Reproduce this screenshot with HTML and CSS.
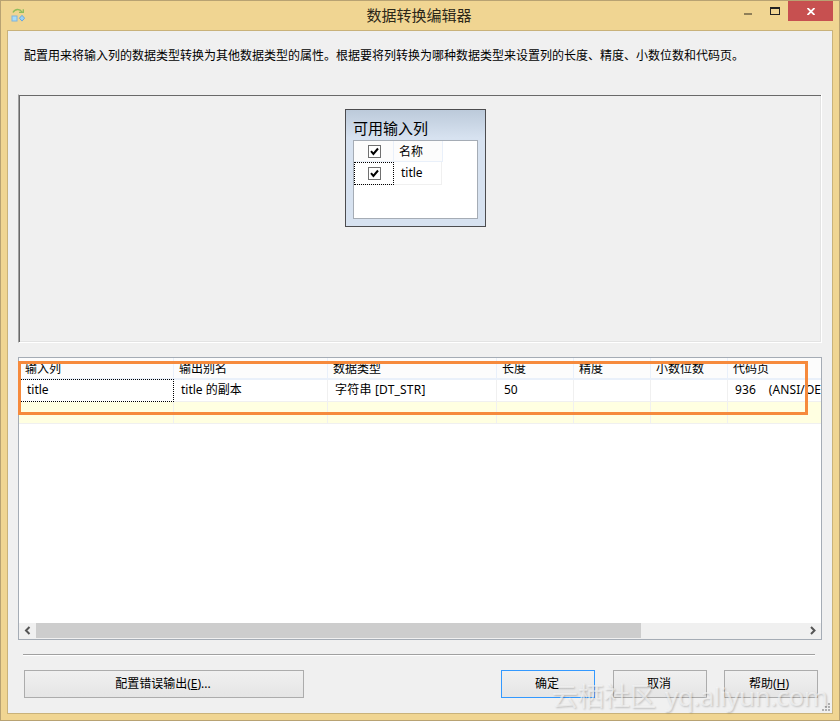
FILE: index.html
```
<!DOCTYPE html>
<html lang="zh-CN">
<head>
    <meta charset="UTF-8">
    <title>数据转换编辑器</title>
    <link rel="stylesheet" href="styles.css">
</head>
<body>
    <div class="window">
        <div class="titlebar">
            <svg class="app-icon" width="14" height="14" viewBox="0 0 14 14">
                <path d="M2 4.5C4 .5 9 .5 11 4" fill="none" stroke="#8fbd5c" stroke-width="1.4"/>
                <path d="M8 4.3h4.3v-3" fill="none" stroke="#8fbd5c" stroke-width="1.3"/>
                <rect x="1" y="8" width="5" height="5" fill="#a9dcf8" stroke="#7fb4dc"/>
                <path d="M11 7.3l2.6 2.9-2.6 2.9-2.6-2.9z" fill="#9bd2f7" stroke="#6aa7dc"/>
            </svg>
            <h1>数据转换编辑器</h1>
            <div class="controls">
                <svg width="54" height="20" viewBox="0 0 54 20" shape-rendering="crispEdges">
                    <rect x="10" y="12" width="8" height="2" fill="#8f7f58"/>
                    <path d="M36 6h10v8H36zM37 8v5h8V8z" fill="#222" fill-rule="evenodd"/>
                </svg>
                <div class="close">
                    <svg width="8" height="7" viewBox="0 0 8 7"><path d="M.5 0l7 7M7.5 0l-7 7" stroke="#fff" stroke-width="1.8"/></svg>
                </div>
            </div>
        </div>

        <div class="client">
            <p class="intro">配置用来将输入列的数据类型转换为其他数据类型的属性。根据要将列转换为哪种数据类型来设置列的长度、精度、小数位数和代码页。</p>

            <div class="canvas">
                <div class="inputs">
                    <h2>可用输入列</h2>
                    <div class="input-list">
                        <div class="input-row head">
                            <span class="check-cell"><svg class="check" width="13" height="13" viewBox="0 0 13 13"><rect x=".5" y=".5" width="12" height="12" fill="#fff" stroke="#707070"/><path d="M3 6.2l2.4 2.7L10 3.5" fill="none" stroke="#000" stroke-width="2"/></svg></span>
                            <span class="name">名称</span>
                        </div>
                        <div class="input-row">
                            <span class="check-cell focus"><svg class="check" width="13" height="13" viewBox="0 0 13 13"><rect x=".5" y=".5" width="12" height="12" fill="#fff" stroke="#707070"/><path d="M3 6.2l2.4 2.7L10 3.5" fill="none" stroke="#000" stroke-width="2"/></svg></span>
                            <span class="name">title</span>
                        </div>
                    </div>
                </div>
            </div>

            <div class="grid-wrap">
                <div class="grid">
                    <div class="row header">
                        <span>输入列</span><span>输出别名</span><span>数据类型</span><span>长度</span><span>精度</span><span>小数位数</span><span>代码页</span>
                    </div>
                    <div class="row">
                        <span class="focus">title</span><span>title 的副本</span><span class="type">字符串 [DT_STR]</span><span>50</span><span></span><span></span><span class="codepage">936 &nbsp;&nbsp;&nbsp;(ANSI/OE</span>
                    </div>
                    <div class="row new">
                        <span></span><span></span><span></span><span></span><span></span><span></span><span></span>
                    </div>
                    <div class="scrollbar">
                        <svg class="arrow" width="17" height="15" viewBox="0 0 17 15"><path d="M10.5 4L7 7.5l3.5 3.5" fill="none" stroke="#555" stroke-width="2"/></svg>
                        <div class="thumb"></div>
                        <svg class="arrow" width="17" height="15" viewBox="0 0 17 15"><path d="M7 4l3.5 3.5L7 11" fill="none" stroke="#555" stroke-width="2"/></svg>
                    </div>
                </div>
                <div class="highlight"></div>
            </div>

            <div class="separator"></div>

            <div class="buttons">
                <button class="wide">配置错误输出(<u>E</u>)...</button>
                <button class="default">确定</button>
                <button>取消</button>
                <button>帮助(<u>H</u>)</button>
            </div>

            <svg class="grip" width="8" height="8" viewBox="0 0 8 8" fill="#b0b0b0" shape-rendering="crispEdges">
                <path d="M6 0h2v2H6zM3 3h2v2H3zM6 3h2v2H6zM0 6h2v2H0zM3 6h2v2H3zM6 6h2v2H6z"/>
            </svg>
            <div class="watermark"><span>云栖社区</span><span class="site">yq.aliyun.com</span></div>
        </div>
    </div>
</body>
</html>
```

FILE: styles.css
```
* {
    box-sizing: border-box;
}

body {
    margin: 0;
    font-family: "Noto Sans", "Noto Sans CJK SC", sans-serif;
    font-size: 12px;
    color: #000;
}

.window {
    width: 840px;
    height: 721px;
    border: 1px solid #b8a272;
    background: #f0d592;
    padding: 0 6px;
    overflow: hidden;
}

.titlebar {
    display: grid;
    grid-template-columns: 98px 1fr 100px;
    height: 29px;
}

.app-icon {
    margin: 7px 0 0 4px;
}

.titlebar h1 {
    margin: 0;
    font-size: 15px;
    font-weight: normal;
    line-height: 28px;
    text-align: center;
    color: #2c2718;
}

.controls {
    display: flex;
    justify-content: flex-end;
}

.close {
    display: flex;
    align-items: center;
    justify-content: center;
    width: 45px;
    height: 20px;
    padding-top: 1px;
    background: #c75050;
}

.client {
    position: relative;
    height: 684px;
    border: 1px solid #c9b27a;
    background: #f0f0f0;
    padding: 0 10px;
}

.intro {
    margin: 0;
    padding: 15px 0 0 6px;
    height: 63px;
    line-height: 20px;
    white-space: nowrap;
}

.canvas {
    width: 804px;
    height: 249px;
    border: 1px solid;
    border-color: #f0f0f0 #fff #fff #a0a0a0;
    box-shadow: inset 1px 1px #696969, inset -1px -1px #e3e3e3;
    padding-top: 14px;
}

.inputs {
    width: 141px;
    height: 118px;
    margin-left: 326px;
    padding: 0 7px;
    border: 1px solid #4c4c4f;
    background: linear-gradient(#bccada, #d7e2f0 28px);
}

.inputs h2 {
    margin: 0;
    height: 30px;
    font-size: 15px;
    font-weight: normal;
    line-height: 36px;
}

.input-list {
    height: 79px;
    width: 125px;
    border: 1px solid #a5acb5;
    background: #fff;
}

.input-row {
    display: flex;
    width: 88px;
    height: 23px;
    border-right: 1px solid #f0f0f0;
    border-bottom: 1px solid #f0f0f0;
    line-height: 22px;
}

.input-row.head {
    width: 89px;
    height: 21px;
    border-color: #e9f0fa;
    background: #fcfcfc;
}

.check-cell {
    width: 40px;
    border-right: 1px solid #e9f0fa;
}

.check-cell.focus {
    height: 23px;
}

.check {
    display: block;
    margin: 4px 0 0 14px;
}

.focus {
    border: 1px dotted #000;
}

.check-cell.focus .check {
    margin-left: 13px;
}

.name {
    padding-left: 5px;
}

.input-row:not(.head) .name {
    padding-left: 7px;
}

.grid-wrap {
    position: relative;
    margin-top: 14px;
}

.grid {
    display: flex;
    flex-direction: column;
    width: 804px;
    height: 283px;
    border: 1px solid #a5acb5;
    background: #fff;
    overflow: hidden;
}

.row {
    display: grid;
    grid-template-columns: 155px 154px 169px 77px 77px 77px 93px;
    flex: none;
    height: 22px;
    line-height: 20px;
    white-space: nowrap;
}

.row span {
    border-right: 1px solid #f0f0f0;
    border-bottom: 1px solid #f0f0f0;
    padding-left: 7px;
}

.row span:last-child {
    border-right: none;
}

.header {
    line-height: 22px;
    background: #fcfcfc;
}

.header span {
    height: 22px;
    border-color: #e9f0fa;
    border-bottom-width: 2px;
    padding-left: 5px;
}

.header span:first-child {
    padding-left: 6px;
}

.row .focus {
    height: 23px;
    margin-top: -1px;
    border: 1px dotted #000;
}

.row .type {
    letter-spacing: 0.2px;
}

.row .codepage {
    letter-spacing: 0.1px;
}

.new {
    background: #ffffe1;
}

.scrollbar {
    display: flex;
    flex: none;
    height: 16px;
    margin-top: auto;
    background: #f0f0f0;
}

.thumb {
    width: 605px;
    height: 15px;
    margin-right: auto;
    background: #cdcdcd;
}

/* orange frame marking the mapped row */
.highlight {
    position: absolute;
    top: 4px;
    left: 0;
    width: 790px;
    height: 54px;
    border: 3px solid #f68a3c;
}

.separator {
    width: 792px;
    height: 2px;
    margin: 14px 0 0 5px;
    background: #fff;
    border-top: 1px solid #a0a0a0;
}

.buttons {
    display: flex;
    margin: 14px 0 0 6px;
}

.buttons button {
    width: 94px;
    height: 28px;
    margin-right: 18px;
    padding: 0 2px 2px 0;
    border: 1px solid #acacac;
    background: linear-gradient(#f0f0f0, #e5e5e5);
    font: inherit;
    color: #000;
}

.buttons button:last-child {
    margin: 0 0 0 -1px;
    padding-right: 4px;
}

.buttons .wide {
    width: 280px;
    margin-right: 197px;
}

.buttons .default {
    border-color: #3399ff;
}

.grip {
    position: absolute;
    right: 2px;
    bottom: 2px;
}

.watermark {
    position: absolute;
    left: 544px;
    top: 645px;
    display: flex;
    gap: 9px;
    font-size: 26px;
    line-height: 40px;
    white-space: nowrap;
    color: rgba(248, 248, 248, 0.65);
    text-shadow: 1px 1px 2px rgba(0, 0, 0, 0.2);
}

.site {
    letter-spacing: -0.5px;
}
```
